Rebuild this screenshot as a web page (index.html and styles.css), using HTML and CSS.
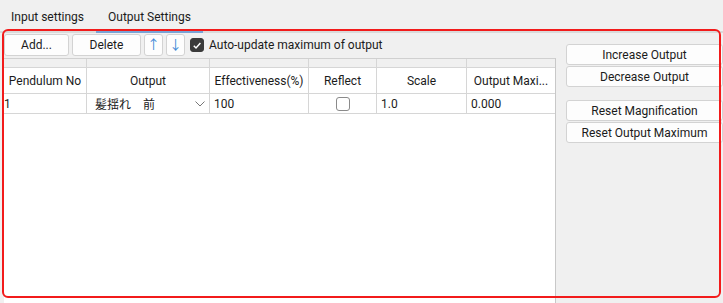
FILE: index.html
```html
<!DOCTYPE html>
<html>
<head>
<meta charset="utf-8">
<link rel="stylesheet" href="styles.css">
</head>
<body>
<div class="tabs">
  <div class="tab first">Input settings</div>
  <div class="tab active">Output Settings</div>
</div>
<div class="panel">
  <div class="left">
    <div class="toolbar">
      <button class="btn w-add">Add...</button>
      <button class="btn w-del">Delete</button>
      <button class="btn w-arr arrow">↑</button>
      <button class="btn w-arr arrow">↓</button>
      <label class="check">
        <span class="cb checked"><svg width="13" height="13" viewBox="0 0 13 13"><path d="M3 6.8 L5.4 9.2 L10.2 3.8" fill="none" stroke="#fff" stroke-width="1.6"/></svg></span>
        <span>Auto-update maximum of output</span>
      </label>
    </div>
    <div class="grid">
      <div class="row strip">
        <div class="c c1"></div><div class="c c2"></div><div class="c c3"></div><div class="c c4"></div><div class="c c5"></div><div class="c c6"></div>
      </div>
      <div class="row head">
        <div class="c c1">Pendulum No</div>
        <div class="c c2">Output</div>
        <div class="c c3">Effectiveness(%)</div>
        <div class="c c4">Reflect</div>
        <div class="c c5">Scale</div>
        <div class="c c6">Output Maxi...</div>
      </div>
      <div class="row data">
        <div class="c c1">1</div>
        <div class="c c2 combo"><span>髪揺れ　前</span><svg width="10" height="6" viewBox="0 0 10 6"><path d="M0.5 0.5 L5 5 L9.5 0.5" fill="none" stroke="#777" stroke-width="1"/></svg></div>
        <div class="c c3">100</div>
        <div class="c c4 center"><span class="cb"></span></div>
        <div class="c c5">1.0</div>
        <div class="c c6">0.000</div>
      </div>
    </div>
  </div>
  <div class="right">
    <button class="btn side">Increase Output</button>
    <button class="btn side">Decrease Output</button>
    <button class="btn side gap">Reset Magnification</button>
    <button class="btn side">Reset Output Maximum</button>
  </div>
</div>
<div class="highlight"></div>
</body>
</html>
```
FILE: styles.css
```css
* { box-sizing: border-box; }
html, body { margin: 0; padding: 0; }
body {
  width: 723px;
  height: 303px;
  overflow: hidden;
  background: #f0f0f0;
  font-family: Roboto, "Noto Sans CJK JP", sans-serif;
  font-size: 12px;
  color: #1b1b1b;
  position: relative;
}
.tabs {
  display: flex;
  height: 33px;
  border-bottom: 2px solid #dadada;
}
.tab {
  padding: 9px 12px 0 12px;
  height: 31px;
  line-height: 16px;
}
.tab.first { padding-left: 11px; }
.tab.active {
  height: 33px;
  border-bottom: 2px solid #7aa3d6;
}
.panel {
  display: flex;
  height: 270px;
}
.left {
  width: 556px;
  padding: 1px 0 0 4px;
  display: flex;
  flex-direction: column;
}
.toolbar {
  display: flex;
  align-items: center;
  gap: 3px;
  height: 22px;
}
.btn {
  font: inherit;
  color: #1b1b1b;
  background: #fdfdfd;
  border: 1px solid #d3d3d3;
  border-radius: 3px;
  height: 22px;
  padding: 0;
  line-height: 18px;
}
.w-add { width: 65px; }
.w-del { width: 69px; }
.w-arr { width: 19px; }
.arrow { color: #3d8ad6; font-size: 13px; font-weight: 400; }
.check {
  display: flex;
  align-items: center;
  gap: 5px;
  margin-left: 2px;
}
.cb {
  display: inline-block;
  width: 14px;
  height: 14px;
  border: 1px solid #8a8a8a;
  border-radius: 3px;
  background: #fff;
}
.cb.checked {
  background: #3a3a3a;
  border-color: #3a3a3a;
  display: flex;
  align-items: center;
  justify-content: center;
}
.grid {
  margin-top: 2px;
  flex: 1;
  background: #fff;
  border-top: 1px solid #d0d0d0;
  border-right: 1px solid #c8c8c8;
  margin-bottom: -4px;
}
.row { display: flex; border-bottom: 1px solid #d6d6d6; }
.strip { height: 9px; background: #f0f0f0; }
.head { height: 26px; }
.data { height: 20px; }
.c {
  border-right: 1px solid #d6d6d6;
  display: flex;
  align-items: center;
  white-space: nowrap;
  overflow: hidden;
}
.c:last-child { border-right: none; }
.head .c { justify-content: center; }
.data .c { padding-left: 4px; }
.data .c1 { padding-left: 0; }
.c1 { width: 83px; }
.c2 { width: 123px; }
.c3 { width: 99px; }
.c4 { width: 68px; }
.c5 { width: 90px; }
.c6 { width: 88px; }
.data .combo { justify-content: space-between; padding-left: 8px; padding-right: 4px; }
.data .center { justify-content: center; padding-left: 0; }
.right {
  margin-left: 10px;
  padding-top: 11px;
  display: flex;
  flex-direction: column;
  gap: 1px;
  width: 157px;
}
.side { height: 21px; width: 157px; }
.side.gap { margin-top: 12px; }
.highlight {
  position: absolute;
  left: 2px;
  top: 29px;
  width: 719px;
  height: 269px;
  border: 2px solid #f21b1b;
  border-radius: 6px;
  pointer-events: none;
}
```
